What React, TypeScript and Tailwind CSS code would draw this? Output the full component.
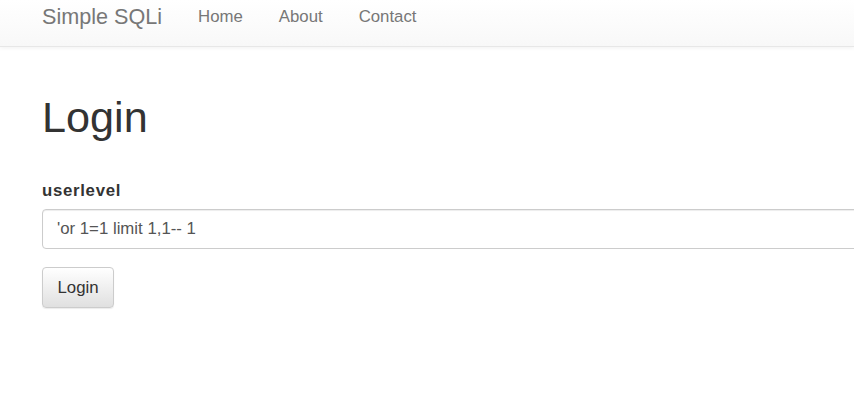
export default function App() {
  return (
    <div className="w-[854px] h-[402px] overflow-hidden bg-white font-['Liberation_Sans',Arial,sans-serif] text-[#333]">
      {/* Navbar */}
      <nav className="h-[47px] bg-gradient-to-b from-white to-[#f8f8f8] border-b border-[#e7e7e7] shadow-[0_1px_4px_rgba(0,0,0,0.06)] flex items-center pl-[42px]">
        <span className="text-[21.6px] text-[#777] leading-none mt-[-12px]">Simple SQLi</span>
        <ul className="flex items-center ml-[36px] mt-[-11px] text-[16.8px] text-[#777] leading-none">
          <li>Home</li>
          <li className="ml-[36px]">About</li>
          <li className="ml-[36px]">Contact</li>
        </ul>
      </nav>

      {/* Content */}
      <main className="pl-[42px] w-[1200px]">
        <h1 className="text-[43.2px] leading-[1.1] mt-[47px] text-[#333]">Login</h1>

        <form className="mt-[37px]">
          <label className="block text-[16.8px] font-bold leading-[23px] tracking-[0.7px] text-[#333]">userlevel</label>
          <div className="mt-[7px] h-[40px] w-[1000px] border border-[#ccc] rounded-[4px] shadow-[inset_0_1px_1px_rgba(0,0,0,0.075)] flex items-center px-[14px] text-[16.8px] text-[#555]">
            'or 1=1 limit 1,1-- 1
          </div>
          <button
            type="button"
            className="mt-[18px] h-[41px] w-[72px] border border-[#ccc] rounded-[4px] bg-gradient-to-b from-white to-[#e0e0e0] shadow-[0_1px_1px_rgba(0,0,0,0.08)] text-[16.8px] text-[#333] pt-[1px]"
          >
            Login
          </button>
        </form>
      </main>
    </div>
  );
}
